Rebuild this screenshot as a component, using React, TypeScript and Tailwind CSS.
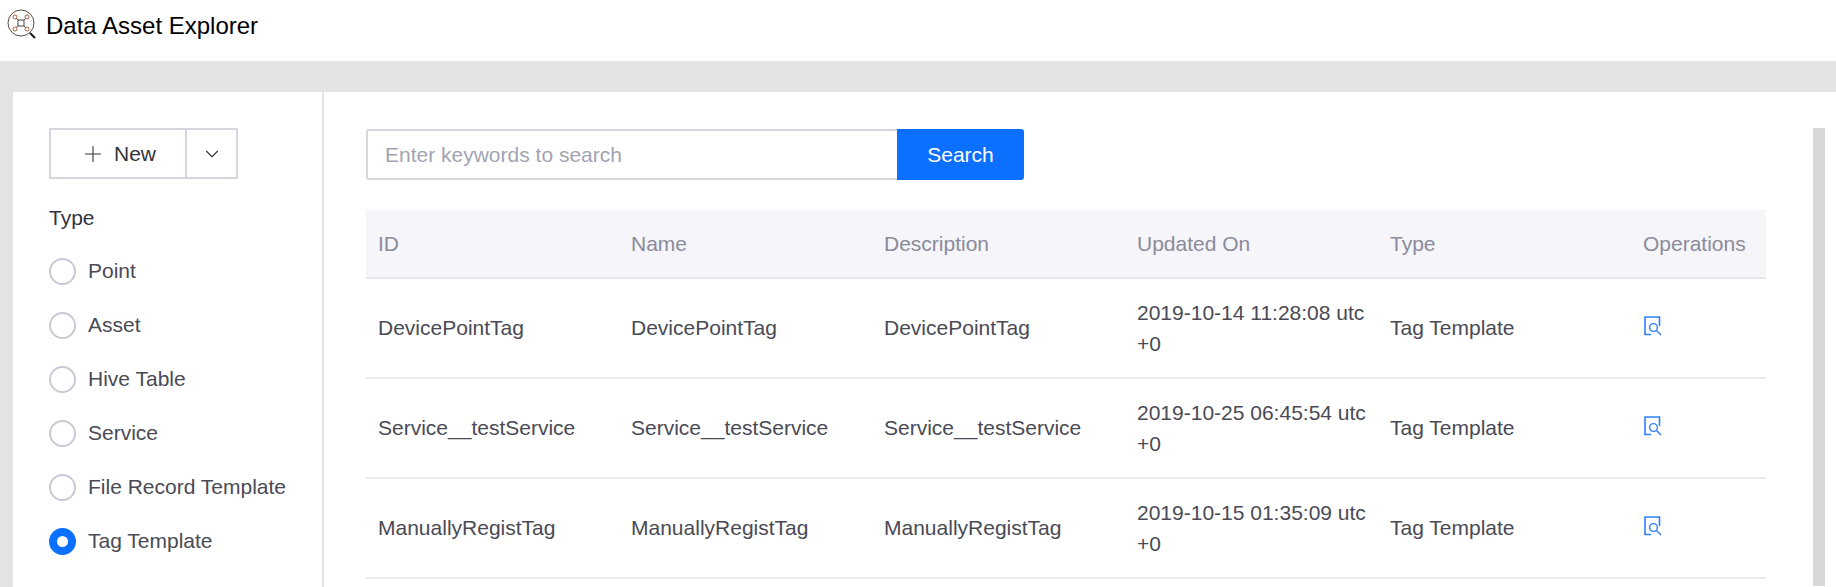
import React from 'react';
import { Plus, ChevronDown } from 'lucide-react';

const types = ['Point', 'Asset', 'Hive Table', 'Service', 'File Record Template', 'Tag Template'];

const rows = [
  { id: 'DevicePointTag', updated: '2019-10-14 11:28:08 utc +0' },
  { id: 'Service__testService', updated: '2019-10-25 06:45:54 utc +0' },
  { id: 'ManuallyRegistTag', updated: '2019-10-15 01:35:09 utc +0' },
];

const headers = ['ID', 'Name', 'Description', 'Updated On', 'Type', 'Operations'];

const LogoIcon = () => (
  <svg width="30" height="30" viewBox="0 0 30 30" fill="none" stroke="#333" strokeWidth="0.9">
    <circle cx="14" cy="14" r="13" stroke="#4a3a30" />
    <path d="M23 24l5 5" stroke="#111" strokeWidth="1.8" />
    <rect x="11" y="11" width="6" height="6" />
    <path d="M11 11L9 9M17 11l2-2M11 17l-2 2M17 17l2 2" />
    <circle cx="8" cy="8" r="2" stroke="#a0522d" />
    <circle cx="20" cy="8" r="2" stroke="#a0522d" />
    <circle cx="8" cy="20" r="2" stroke="#a0522d" />
    <circle cx="20" cy="20" r="2" stroke="#a0522d" />
  </svg>
);

const ViewIcon = () => (
  <svg width="18" height="20" viewBox="0 0 18 20" fill="none" stroke="#2f80f7">
    <path d="M7 18.5H1V1h14.5v9" strokeWidth="1.6" />
    <circle cx="9.5" cy="11.5" r="3.9" strokeWidth="1.4" />
    <path d="M12.5 14.5l4.5 4.5" strokeWidth="1.4" />
  </svg>
);

const Radio = ({ label, checked }: { label: string; checked?: boolean }) => (
  <label className="flex items-center h-[54px] gap-3">
    {checked ? (
      <span className="w-[27px] h-[27px] rounded-full border-[8px] border-[#0b6fff] bg-white shrink-0" />
    ) : (
      <span className="w-[27px] h-[27px] rounded-full border-2 border-[#c9c9d6] bg-white shrink-0" />
    )}
    <span className="text-[21px] text-[#4a4a55] whitespace-nowrap">{label}</span>
  </label>
);

export default function App() {
  return (
    <div className="h-[587px] overflow-hidden bg-[#e3e3e3] font-['Liberation_Sans',Arial,sans-serif]">
      <header className="h-[62px] bg-white flex items-start pl-[7px] pt-[9px] gap-[9px] border-b border-[#e8e8e8]">
        <LogoIcon />
        <h1 className="text-[24px] leading-[34px] text-black">Data Asset Explorer</h1>
      </header>

      <div className="flex mt-[30px] ml-[13px] h-[495px] bg-white">
        <aside className="w-[311px] shrink-0 border-r-2 border-[#e3e3ea] pl-[36px] pt-[36px]">
          <div className="flex w-[189px] h-[51px] border-2 border-[#d6d6e0] text-[21px] text-[#33333d]">
            <button className="w-[136px] flex items-center justify-center gap-[8px] border-r-2 border-[#d6d6e0]">
              <Plus size={26} strokeWidth={1} />
              New
            </button>
            <button className="flex-1 flex items-center justify-center">
              <ChevronDown size={22} strokeWidth={1.2} />
            </button>
          </div>
          <div className="mt-[24px] text-[21px] leading-[30px] text-[#33333d]">Type</div>
          <div className="mt-[11px]">
            {types.map((t) => (
              <Radio key={t} label={t} checked={t === 'Tag Template'} />
            ))}
          </div>
        </aside>

        <main className="flex-1 flex min-w-0 pl-[42px] pt-[37px]">
          <div className="w-[1400px] shrink-0">
            <div className="flex h-[51px] w-[658px]">
              <input
                placeholder="Enter keywords to search"
                className="w-[531px] h-full border-2 border-r-0 border-[#d6d6e0] rounded-l-[3px] pl-[17px] pr-[18px] text-[21px] outline-none placeholder:text-[#a3a3b3]"
              />
              <button className="flex-1 bg-[#0b6fff] text-white text-[21px] rounded-r-[3px]">Search</button>
            </div>

            <table className="mt-[30px] w-[1400px] table-fixed border-collapse text-[21px]">
              <colgroup>
                <col className="w-[253px]" />
                <col className="w-[253px]" />
                <col className="w-[253px]" />
                <col className="w-[253px]" />
                <col className="w-[253px]" />
                <col />
              </colgroup>
              <thead>
                <tr className="h-[68px] bg-[#f5f5fa] border-b-2 border-[#e6e6ec]">
                  {headers.map((h) => (
                    <th key={h} className="pl-[12px] pr-[12px] text-left font-normal text-[#8b8b9a] whitespace-nowrap">
                      {h}
                    </th>
                  ))}
                </tr>
              </thead>
              <tbody className="text-[#4a4a55]">
                {rows.map((r) => (
                  <tr key={r.id} className="h-[100px] border-b-2 border-[#ebebf0]">
                    <td className="px-[12px]">{r.id}</td>
                    <td className="px-[12px]">{r.id}</td>
                    <td className="px-[12px]">{r.id}</td>
                    <td className="pl-[12px] leading-[31px]">{r.updated}</td>
                    <td className="px-[12px]">Tag Template</td>
                    <td className="px-[13px]">
                      <div className="-mt-[4px]">
                        <ViewIcon />
                      </div>
                    </td>
                  </tr>
                ))}
              </tbody>
            </table>
          </div>
          <div className="ml-[47px] mt-[-1px] w-[12px] h-full bg-[#d8d8d8]" />
        </main>
      </div>
    </div>
  );
}
